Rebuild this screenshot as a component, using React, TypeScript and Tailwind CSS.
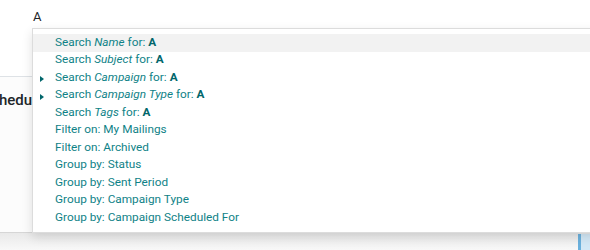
import { ReactNode } from 'react'

type Item = { pre: string; em?: string; post?: string; caret?: boolean; active?: boolean }

const items: Item[] = [
  { pre: 'Search ', em: 'Name', post: ' for: ', active: true },
  { pre: 'Search ', em: 'Subject', post: ' for: ' },
  { pre: 'Search ', em: 'Campaign', post: ' for: ', caret: true },
  { pre: 'Search ', em: 'Campaign Type', post: ' for: ', caret: true },
  { pre: 'Search ', em: 'Tags', post: ' for: ' },
  { pre: 'Filter on: My Mailings' },
  { pre: 'Filter on: Archived' },
  { pre: 'Group by: Status' },
  { pre: 'Group by: Sent Period' },
  { pre: 'Group by: Campaign Type' },
  { pre: 'Group by: Campaign Scheduled For' },
]

function Row({ item }: { item: Item }) {
  let body: ReactNode = item.pre
  if (item.em) {
    body = (
      <>
        {item.pre}
        <em>{item.em}</em>
        {item.post}
        <b className="font-bold text-[#01666b]">A</b>
      </>
    )
  }
  return (
    <li className={`relative flex h-[17.5px] items-center pl-[22px] ${item.active ? 'bg-[#f2f2f2]' : ''}`}>
      {item.caret && (
        <span className="absolute left-[7px] top-[7px] h-0 w-0 border-y-[3px] border-l-[4px] border-y-transparent border-l-[#01666b]" />
      )}
      <span className="whitespace-nowrap">{body}</span>
    </li>
  )
}

export default function App() {
  return (
    <div className="relative h-[250px] w-[590px] overflow-hidden bg-white font-['Roboto',sans-serif]">
      {/* search input */}
      <div className="h-[76px] px-[33px] pt-[7px] text-[13px] text-[#212529]">A</div>

      {/* list header behind dropdown */}
      <div className="flex h-[156px] flex-col overflow-hidden border-t border-[#dee2e6] bg-[#fcfcfc]">
        <div className="ml-[-18px] mt-[12px] text-[15px] font-medium text-[#212529]">Scheduled</div>
      </div>

      {/* bottom strip */}
      <div className="flex h-[18px] border-t border-[#d6d6d6] bg-gradient-to-b from-[#e9e9e9] to-[#f8f8f8]">
        <div className="ml-auto mt-[1px] flex w-[12px]">
          <div className="w-[3px] bg-[#6bb1dd]" />
          <div className="flex-1 bg-[#d3e8f6]" />
        </div>
      </div>

      {/* autocomplete dropdown */}
      <ul className="absolute left-[32px] right-[-10px] top-[28px] border border-[#dcdcdc] bg-white pb-[5px] pt-[5px] text-[11.8px] text-[#0f8287] shadow-[0_4px_10px_rgba(0,0,0,0.12)]">
        {items.map((it, i) => (
          <Row key={i} item={it} />
        ))}
      </ul>
    </div>
  )
}
